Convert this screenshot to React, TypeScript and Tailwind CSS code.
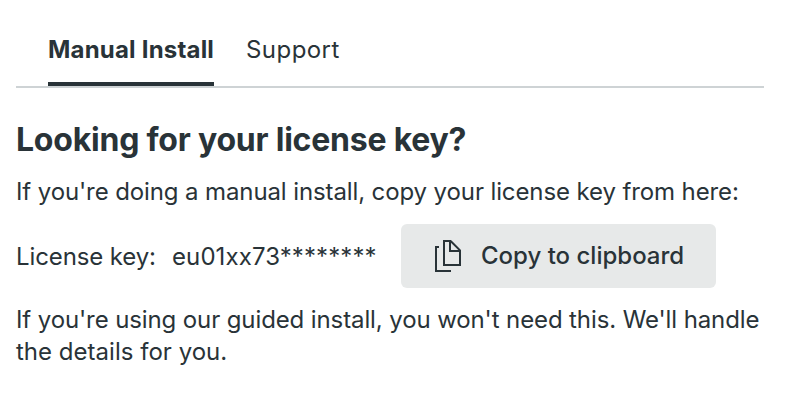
export default function App() {
  return (
    <main className="h-[406px] w-[808px] bg-white px-4 pt-[30px] font-['Inter',sans-serif] text-[24px] leading-8 text-[#293338] antialiased">
      <nav className="flex h-[58px] w-[748px] gap-8 border-b-2 border-[#ced3d5] px-8">
        <button className="h-[56px] w-[166px] whitespace-nowrap border-b-4 border-[#293338] pb-3 text-left font-bold leading-10 tracking-[0.2px]">Manual Install</button>
        <button className="h-[56px] pb-4 leading-10 tracking-[0.45px]">Support</button>
      </nav>
      <h1 className="mt-8 text-[32px] font-bold leading-10 tracking-[-0.22px]">Looking for your license key?</h1>
      <p className="mt-4 whitespace-nowrap tracking-[-0.11px]">If you're doing a manual install, copy your license key from here:</p>
      <div className="mt-4 flex h-16 items-center">
        <span className="w-[156px] pt-0.5 tracking-[-0.11px]">License key:</span>
        <span className="w-[229px] pt-0.5 tracking-[0.1px]">eu01xx73********</span>
        <button className="flex h-16 w-[315px] items-center rounded-[6px] bg-[#e7e9e9] pl-8 font-medium">
          <svg width="32" height="32" viewBox="0 0 32 32" fill="none" stroke="#293338" strokeWidth="2">
            <path d="M18 1H11V25H27V10.4L17.6 1M17 1V11H27M6 7H3V31H18" />
          </svg>
          <span className="ml-4">Copy to clipboard</span>
        </button>
      </div>
      <p className="mt-4 w-[760px] tracking-[-0.11px]">If you're using our guided install, you won't need this. We'll handle <span className="tracking-[0.02px]">the details for you.</span></p>
    </main>
  );
}
